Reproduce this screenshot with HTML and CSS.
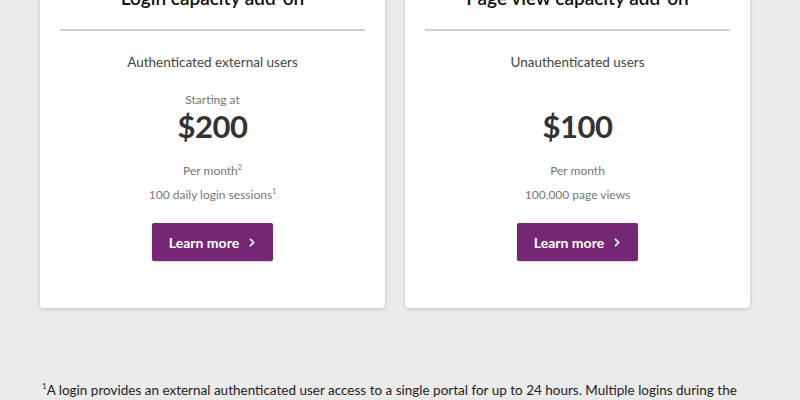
FILE: index.html
```html
<!DOCTYPE html>
<html lang="en">
<head>
<meta charset="utf-8">
<title>Capacity add-ons</title>
<link rel="stylesheet" href="styles.css">
</head>
<body>
<main class="page">
  <section class="cards">
    <article class="card">
      <h2 class="card-title">Login capacity add-on</h2>
      <hr class="divider">
      <p class="subtitle">Authenticated external users</p>
      <p class="starting">Starting at</p>
      <p class="price">$200</p>
      <p class="meta first">Per month<sup>2</sup></p>
      <p class="meta">100 daily login sessions<sup>1</sup></p>
      <a class="btn" href="#">Learn more
        <svg class="chev" viewBox="0 0 10 12" width="8" height="11"><path d="M2.5 1.5 L7 6 L2.5 10.5" fill="none" stroke="#fff" stroke-width="2"/></svg>
      </a>
    </article>
    <article class="card">
      <h2 class="card-title">Page view capacity add-on</h2>
      <hr class="divider">
      <p class="subtitle">Unauthenticated users</p>
      <p class="starting empty">&nbsp;</p>
      <p class="price">$100</p>
      <p class="meta first">Per month</p>
      <p class="meta">100,000 page views</p>
      <a class="btn" href="#">Learn more
        <svg class="chev" viewBox="0 0 10 12" width="8" height="11"><path d="M2.5 1.5 L7 6 L2.5 10.5" fill="none" stroke="#fff" stroke-width="2"/></svg>
      </a>
    </article>
  </section>
  <p class="footnote"><sup>1</sup>A login provides an external authenticated user access to a single portal for up to 24 hours. Multiple logins during the same 24-hour period count as a single login.</p>
</main>
</body>
</html>
```
FILE: styles.css
```css
html, body {
  margin: 0;
  padding: 0;
}
body {
  background: #ebebeb;
  font-family: Lato, "Open Sans", sans-serif;
  overflow: hidden;
}
.page {
  margin-top: -40px;
}
.cards {
  display: flex;
  gap: 20px;
  padding-left: 40px;
}
.card {
  width: 345px;
  box-sizing: border-box;
  background: #fff;
  border-radius: 4px;
  box-shadow: 0 1px 4px rgba(0,0,0,0.18);
  padding: 24px 20px 47px;
  display: flex;
  flex-direction: column;
  align-items: center;
  text-align: center;
}
.card-title {
  margin: 0;
  font-size: 19px;
  line-height: 28px;
  font-weight: 600;
  color: #111;
}
.divider {
  align-self: stretch;
  border: 0;
  height: 2px;
  background: #cfcfcf;
  margin: 17px 0 0;
}
.subtitle {
  margin: 20px 0 0;
  font-size: 13.5px;
  line-height: 22px;
  color: #444;
}
.starting {
  margin: 18px 0 0;
  font-size: 12px;
  line-height: 18px;
  color: #777;
}
.price {
  margin: 0;
  font-size: 31px;
  line-height: 34px;
  font-weight: 700;
  letter-spacing: -0.5px;
  color: #333;
}
.meta {
  margin: 4px 0 0;
  font-size: 12px;
  line-height: 20px;
  color: #777;
}
.meta.first {
  margin-top: 18px;
}
.meta sup {
  font-size: 7px;
  line-height: 0;
  vertical-align: 5px;
}
.btn {
  margin-top: 18px;
  height: 38px;
  width: 121px;
  box-sizing: border-box;
  display: flex;
  align-items: center;
  justify-content: center;
  gap: 9px;
  background: #742774;
  color: #fff;
  text-decoration: none;
  font-size: 14px;
  font-weight: 700;
  border-radius: 2px;
  box-shadow: 0 1px 2px rgba(0,0,0,0.2);
}
.footnote {
  margin: 71px 0 0;
  padding-left: 42px;
  padding-right: 40px;
  font-size: 13.5px;
  line-height: 22px;
  color: #222;
}
.footnote sup {
  font-size: 8px;
  line-height: 0;
  vertical-align: 6px;
}
```
